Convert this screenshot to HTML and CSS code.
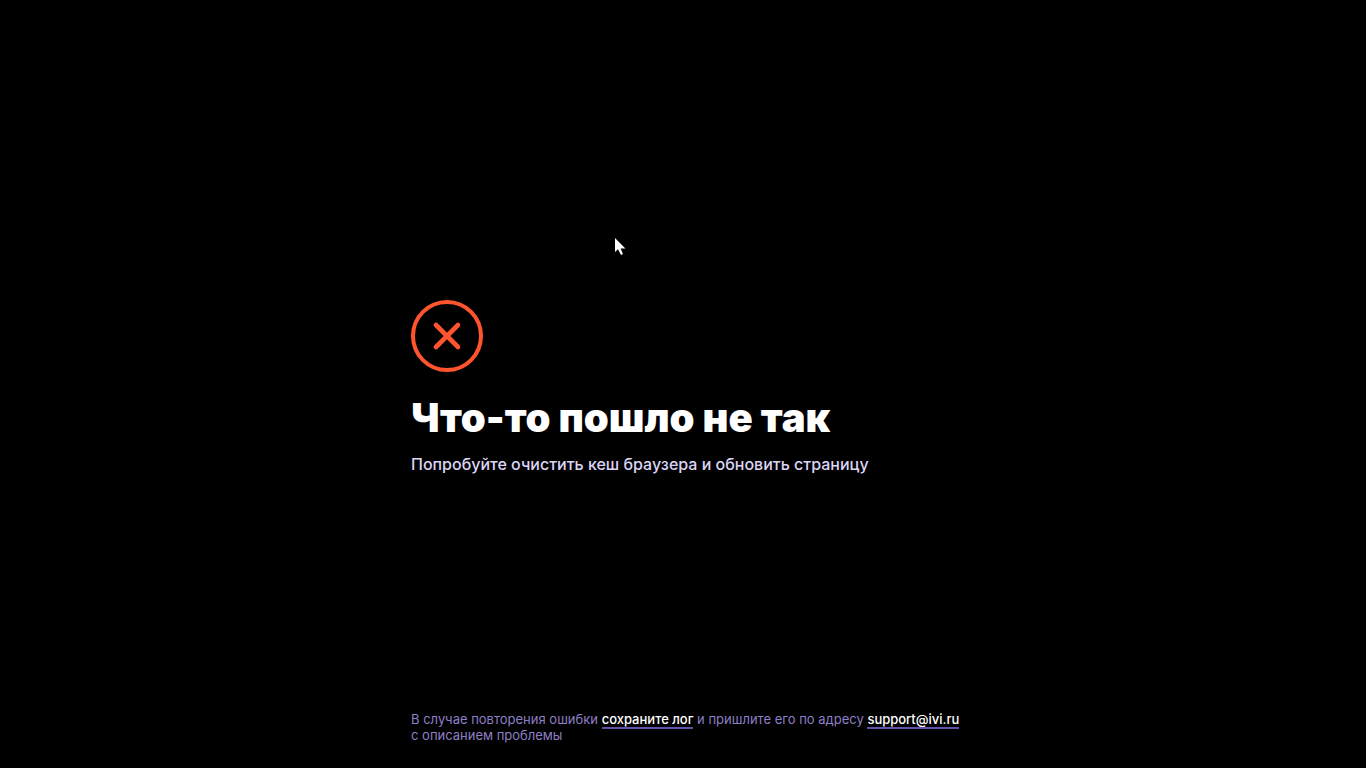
FILE: index.html
```html
<!DOCTYPE html>
<html lang="ru">
<head>
<meta charset="utf-8">
<meta name="viewport" content="width=device-width, initial-scale=1">
<title>Что-то пошло не так</title>
<link rel="stylesheet" href="styles.css">
</head>
<body>
<div class="page">
  <main class="error">
    <svg class="error-icon" viewBox="0 0 72 72" fill="none" aria-hidden="true">
      <circle cx="36" cy="36" r="34"/>
      <path stroke-width="4.6" d="M25 25L47 47M47 25L25 47"/>
    </svg>
    <h1 class="error-title">Что-то пошло не так</h1>
    <p class="error-hint">Попробуйте очистить кеш браузера и обновить страницу</p>
  </main>
  <footer class="support">
    В случае повторения ошибки <a class="support-link" href="#log">сохраните лог</a> и пришлите его по адресу <a class="support-link" href="mailto:support@ivi.ru">support@ivi.ru</a><br>с описанием проблемы
  </footer>
</div>
<svg class="pointer" viewBox="0 0 12 18" aria-hidden="true">
  <path d="M0 0V14L3 11.2L6 17L8 16L5.6 10.4H10.4Z"/>
</svg>
</body>
</html>
```

FILE: styles.css
```css
body {
  margin: 0;
  background: #000;
  font-family: Inter, "Noto Sans", sans-serif;
}

.page {
  display: grid;
  grid-template-columns: minmax(0, 544px);
  grid-template-rows: 1fr auto 1fr;
  justify-content: center;
  min-height: 100vh;
}

.error {
  grid-row: 2;
  padding-top: 8px;
}

.error-icon {
  display: block;
  width: 72px;
  height: 72px;
  stroke: #ff542e;
  stroke-width: 4;
  stroke-linecap: round;
}

.error-title {
  margin: 20px 0 8px;
  color: #fff;
  font-size: 40px;
  font-weight: 900;
  line-height: 52px;
}

.error-hint {
  margin: 0;
  color: #dcd6f5;
  font-size: 16px;
  font-weight: 500;
  line-height: 24px;
}

.support {
  grid-row: 3;
  align-self: end;
  padding-bottom: 25px;
  color: #8e7fc6;
  font-size: 13px;
  line-height: 16px;
}

@media (min-width: 600px) {
  .support {
    white-space: nowrap;
  }
}

.support-link {
  border-bottom: 2px solid #6251a8;
  color: #fff;
  font-weight: 500;
  text-decoration: none;
}

.pointer {
  position: absolute;
  top: 238px;
  left: 615px;
  width: 12px;
  height: 18px;
  fill: #fff;
  pointer-events: none;
}
```
